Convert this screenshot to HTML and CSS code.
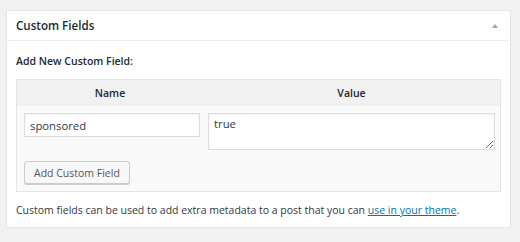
FILE: index.html
```
<!DOCTYPE html>
<html lang="en">
<head>
    <meta charset="UTF-8">
    <title>Custom Fields</title>
    <link rel="stylesheet" href="styles.css">
</head>
<body>
    <div class="postbox">
        <div class="postbox-header">
            <h2>Custom Fields</h2>
            <span class="toggle-arrow"></span>
        </div>
        <div class="inside">
            <p class="new-label">Add New Custom Field:</p>
            <div class="meta-table">
                <div class="meta-head">
                    <div>Name</div>
                    <div>Value</div>
                </div>
                <div class="meta-body">
                    <input type="text" class="meta-name" value="sponsored">
                    <textarea class="meta-value">true</textarea>
                    <button class="meta-add">Add Custom Field</button>
                </div>
            </div>
            <p class="note">Custom fields can be used to add extra metadata to a post that you can <a href="#">use in your theme</a>.</p>
        </div>
    </div>
</body>
</html>
```

FILE: styles.css
```
body {
    margin: 0;
    padding: 10px 9px 0 6px;
    background: #f1f1f1;
    font-family: "Open Sans", sans-serif;
    font-size: 10.5px;
    color: #32373c;
}
.postbox {
    width: 503px;
    height: 216px;
    background: #fff;
    border: 1px solid #e5e5e5;
    box-shadow: 0 1px 1px rgba(0, 0, 0, 0.04);
}
.postbox-header {
    display: flex;
    align-items: center;
    justify-content: space-between;
    height: 29px;
    padding: 0 12px 0 9px;
    border-bottom: 1px solid #eee;
}
.postbox-header h2 {
    margin: 0;
    font-size: 11.6px;
    font-weight: 600;
    color: #23282d;
}
.toggle-arrow {
    width: 0;
    height: 0;
    border-left: 3px solid transparent;
    border-right: 3px solid transparent;
    border-bottom: 4px solid #a0a5aa;
}
.inside {
    padding: 0 9px;
}
.new-label {
    margin: 12px 0 0;
    font-weight: 600;
    line-height: 16px;
    color: #23282d;
}
.meta-table {
    margin-top: 10px;
    width: 483px;
    border: 1px solid #e5e5e5;
    background: #f9f9f9;
}
.meta-head {
    display: grid;
    grid-template-columns: 186px 1fr;
    height: 26px;
    align-items: center;
    background: #f1f1f1;
    font-weight: 600;
    color: #23282d;
    text-align: center;
}
.meta-body {
    display: grid;
    grid-template-columns: 184px 286px;
    padding: 7px 0 7px 7px;
    row-gap: 11px;
    align-items: start;
}
.meta-name, .meta-value {
    box-sizing: border-box;
    margin: 0;
    border: 1px solid #ddd;
    background: #fff;
    font-family: "Open Sans", sans-serif;
    font-size: 11.3px;
    color: #32373c;
    box-shadow: inset 0 1px 2px rgba(0, 0, 0, 0.07);
}
.meta-name {
    width: 176px;
    height: 24px;
    padding: 0 5px;
}
.meta-value {
    width: 287px;
    height: 37px;
    padding: 1px 5px;
    resize: vertical;
    line-height: 18px;
}
.meta-add {
    justify-self: start;
    height: 23px;
    padding: 0 9px;
    border: 1px solid #ccc;
    border-radius: 3px;
    background: #f7f7f7;
    box-shadow: 0 1px 0 #ccc;
    font-family: "Open Sans", sans-serif;
    font-size: 10.5px;
    color: #555;
}
.note {
    margin: 10px 0 0;
    line-height: 16px;
}
.note a {
    color: #0073aa;
}
```
